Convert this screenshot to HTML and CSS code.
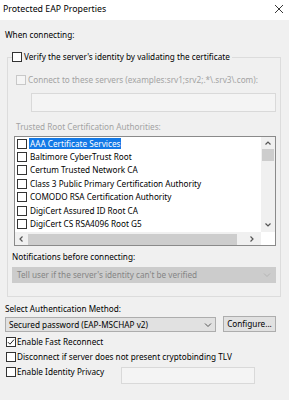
FILE: index.html
```html
<!DOCTYPE html>
<html>
<head>
<meta charset="utf-8">
<link rel="stylesheet" href="styles.css">
</head>
<body>
<div class="titlebar">
  <span class="title">Protected EAP Properties</span>
  <svg class="close" width="10" height="10" viewBox="0 0 10 10"><path d="M1 1L9 9M9 1L1 9" stroke="#222" stroke-width="0.9" fill="none"/></svg>
</div>
<div class="content">
  <div class="label when">When connecting:</div>
  <fieldset class="group">
    <legend class="legend"><span class="cb"></span><span>Verify the server's identity by validating the certificate</span></legend>
    <div class="group-inner">
      <div class="row disabled connect"><span class="cb cb-dis"></span><span>Connect to these servers (examples:srv1;srv2;.*\.srv3\.com):</span></div>
      <div class="textbox servers"></div>
      <div class="label disabled trusted">Trusted Root Certification Authorities:</div>
      <div class="list">
        <div class="items">
          <div class="item"><span class="cb"></span><span class="sel">AAA Certificate Services</span></div>
          <div class="item"><span class="cb"></span><span>Baltimore CyberTrust Root</span></div>
          <div class="item"><span class="cb"></span><span>Certum Trusted Network CA</span></div>
          <div class="item"><span class="cb"></span><span>Class 3 Public Primary Certification Authority</span></div>
          <div class="item"><span class="cb"></span><span>COMODO RSA Certification Authority</span></div>
          <div class="item"><span class="cb"></span><span>DigiCert Assured ID Root CA</span></div>
          <div class="item"><span class="cb"></span><span>DigiCert CS RSA4096 Root G5</span></div>
        </div>
        <div class="vscroll">
          <svg class="arr" width="8" height="6" viewBox="0 0 8 6"><path d="M1.5 4.5L4 2L6.5 4.5" stroke="#555" stroke-width="1.2" fill="none"/></svg>
          <div class="vthumb"></div>
          <div class="vtrack"></div>
          <svg class="arr" width="8" height="6" viewBox="0 0 8 6"><path d="M1.5 1.5L4 4L6.5 1.5" stroke="#555" stroke-width="1.2" fill="none"/></svg>
        </div>
        <div class="hscroll">
          <svg class="arr" width="6" height="8" viewBox="0 0 6 8"><path d="M4.5 1.5L2 4L4.5 6.5" stroke="#555" stroke-width="1.2" fill="none"/></svg>
          <div class="hthumb"></div>
          <svg class="arr" width="6" height="8" viewBox="0 0 6 8"><path d="M1.5 1.5L4 4L1.5 6.5" stroke="#555" stroke-width="1.2" fill="none"/></svg>
        </div>
        <div class="corner"></div>
      </div>
      <div class="label notif">Notifications before connecting:</div>
      <div class="combo combo-dis">
        <span>Tell user if the server's identity can't be verified</span>
        <svg width="8" height="6" viewBox="0 0 8 6"><path d="M1 1.5L4 4.5L7 1.5" stroke="#b5b5b5" stroke-width="1" fill="none"/></svg>
      </div>
    </div>
  </fieldset>
  <div class="label method">Select Authentication Method:</div>
  <div class="method-row">
    <div class="combo combo-auth">
      <span>Secured password (EAP-MSCHAP v2)</span>
      <svg width="8" height="6" viewBox="0 0 8 6"><path d="M1 1.5L4 4.5L7 1.5" stroke="#555" stroke-width="1" fill="none"/></svg>
    </div>
    <div class="button">Configure...</div>
  </div>
  <div class="row opt first"><span class="cb"><svg width="8" height="8" viewBox="0 0 8 8"><path d="M1 4.2L3 6.2L7 1.6" stroke="#222" stroke-width="1" fill="none"/></svg></span><span>Enable Fast Reconnect</span></div>
  <div class="row opt"><span class="cb"></span><span>Disconnect if server does not present cryptobinding TLV</span></div>
  <div class="row opt last"><span class="cb"></span><span class="privacy-label">Enable Identity Privacy</span><div class="textbox privacy"></div></div>
</div>
</body>
</html>
```
FILE: styles.css
```css
* { box-sizing: border-box; }
html, body { margin: 0; padding: 0; }
body {
  width: 289px;
  height: 400px;
  overflow: hidden;
  background: #f0f0f0;
  font-family: "Noto Sans", "Segoe UI", sans-serif;
  font-size: 8.2px;
  line-height: 12px;
  color: #000;
}
.titlebar {
  height: 20px;
  background: #fff;
  display: flex;
  align-items: center;
  justify-content: space-between;
  padding: 0 5px 2px 3px;
  font-size: 8.8px;
}
.close { display: block; }
.content { padding: 0 8px 0 5px; }
.label { height: 12px; white-space: nowrap; }
.when { margin-top: 9px; }
.disabled { color: #a3a3a3; }

.cb {
  width: 10px;
  height: 10px;
  border: 1px solid #333;
  background: #fff;
  flex: none;
  display: flex;
  align-items: center;
  justify-content: center;
}
.cb-dis { border-color: #c8c8c8; background: #f5f5f5; }

.group {
  margin: 10px 0 0 2px;
  padding: 0;
  border: 1px solid #dcdcdc;
  min-width: 0;
}
.legend {
  display: flex;
  align-items: center;
  gap: 2px;
  margin-left: 4px;
  padding: 0 2px 0 0;
  height: 12px;
  white-space: nowrap;
}
.group-inner { padding: 11px 4px 13px 4px; }
.row { display: flex; align-items: center; gap: 2px; white-space: nowrap; height: 12px; }
.connect { margin-left: 4px; }
.textbox {
  border: 1px solid #d9d9d9;
  background: #f4f4f4;
}
.servers { height: 19px; margin: 7px 0 0 19px; }
.trusted { margin: 9px 0 0 4px; }

.list {
  margin: 3px 0 0 2px;
  height: 110px;
  border: 1px solid #8a8a8a;
  background: #fff;
  display: grid;
  grid-template-columns: 1fr 14px;
  grid-template-rows: 95px 13px;
  overflow: hidden;
}
.items { overflow: hidden; padding-left: 2px; }
.item {
  height: 13.4px;
  display: flex;
  align-items: center;
  gap: 3px;
  white-space: nowrap;
}
.item .cb { margin-top: 0; }
.sel {
  background: #1479e6;
  color: #fff;
  padding: 0 1px;
  margin-left: -1px;
  line-height: 11px;
}
.vscroll {
  background: #f0f0f0;
  display: flex;
  flex-direction: column;
  align-items: center;
  padding: 3px 1px 4px 1px;
}
.vscroll .arr { flex: none; }
.vthumb { width: 12px; height: 12px; background: #cdcdcd; margin-top: 3px; flex: none; }
.vtrack { flex: 1; }
.hscroll {
  background: #f0f0f0;
  display: flex;
  align-items: center;
  padding: 1px 3px 0 3px;
  gap: 4px;
}
.hthumb { height: 11px; width: 209px; background: #cdcdcd; }
.hscroll .arr:last-child { margin-left: auto; margin-right: 3px; }
.corner { background: #fff; }

.notif { margin: 5px 0 0 0; }
.combo {
  display: flex;
  align-items: center;
  justify-content: space-between;
  white-space: nowrap;
  padding: 0 4px 0 4px;
}
.combo-dis {
  margin-top: 4px;
  height: 16px;
  background: #cccccc;
  color: #858585;
  border: 1px solid #cccccc;
}
.method { margin-top: 6px; }
.method-row {
  display: flex;
  align-items: flex-end;
  gap: 7px;
  margin-top: 1px;
  height: 16px;
  padding-right: 5px;
}
.combo-auth {
  width: 211px;
  height: 15px;
  background: #e1e1e1;
  border: 1px solid #adadad;
  padding: 0 3px;
}
.button {
  flex: 1;
  height: 16px;
  background: #e1e1e1;
  border: 1px solid #adadad;
  display: flex;
  align-items: center;
  justify-content: center;
}
.opt { height: 14px; margin-left: 1px; gap: 1px; }
.opt.first { margin-top: 3px; }
.opt + .opt { margin-top: 1px; }
.opt.last { align-items: flex-start; height: 20px; }
.opt.last .cb { margin-top: 2px; }
.privacy-label { line-height: 13px; }
.privacy { width: 134px; height: 17px; margin-left: 16px; margin-top: 2px; }
```
